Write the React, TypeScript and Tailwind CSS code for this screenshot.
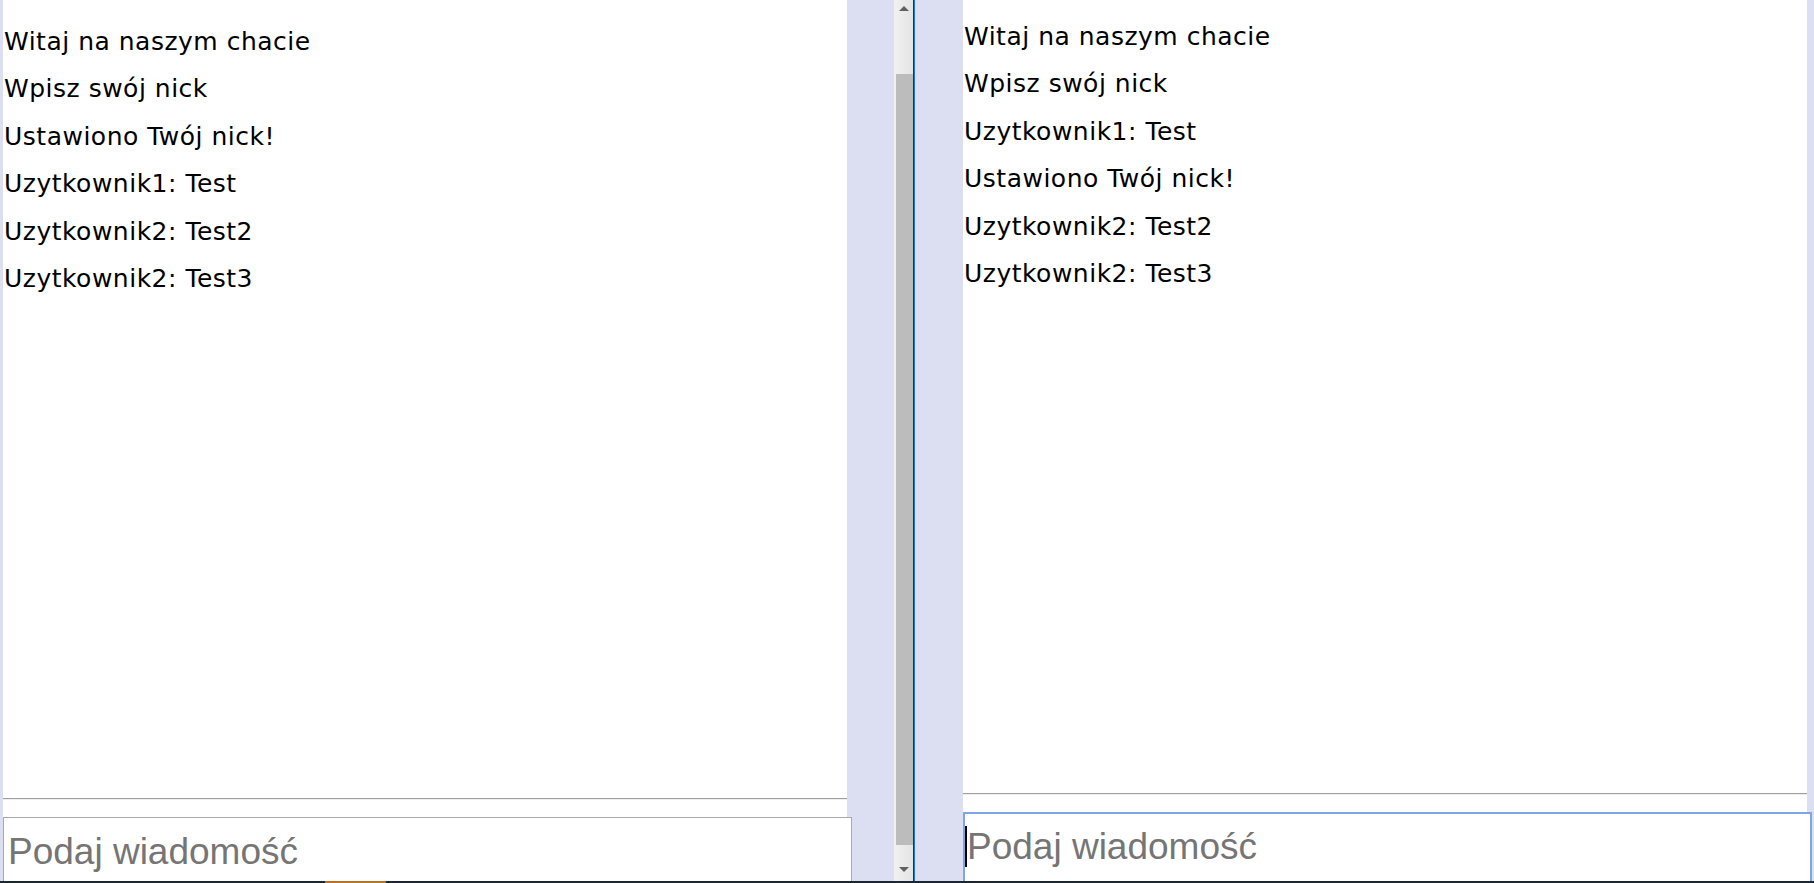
import React from "react";

const msgFont = { fontFamily: '"DejaVu Sans", "Open Sans", sans-serif' };

function Messages({ lines, top }: { lines: string[]; top: string }) {
  return (
    <div className={`flex flex-col ${top}`}>
      {lines.map((l, i) => (
        <div key={i} className="text-[25px] leading-[47.4px] tracking-[0.5px] text-black whitespace-nowrap">
          {l}
        </div>
      ))}
    </div>
  );
}

export default function App() {
  const leftLines = [
    "Witaj na naszym chacie",
    "Wpisz swój nick",
    "Ustawiono Twój nick!",
    "Uzytkownik1: Test",
    "Uzytkownik2: Test2",
    "Uzytkownik2: Test3",
  ];
  const rightLines = [
    "Witaj na naszym chacie",
    "Wpisz swój nick",
    "Uzytkownik1: Test",
    "Ustawiono Twój nick!",
    "Uzytkownik2: Test2",
    "Uzytkownik2: Test3",
  ];
  return (
    <div className="w-[1814px] h-[883px] overflow-hidden flex flex-col bg-[#dcdff2]" style={msgFont}>
      <div className="flex h-[881px] shrink-0 overflow-hidden">
        {/* left frame */}
        <div className="w-[894px] shrink-0 flex pl-[3px]">
          <div className="w-[844px] bg-white flex flex-col shrink-0">
            <div className="h-[798px] shrink-0 pl-[1px]">
              <Messages lines={leftLines} top="pt-[18px]" />
            </div>
            <div className="h-[2px] shrink-0 border-t border-b border-t-[#a0a0a0] border-b-[#eeeeee]" />
            <div className="h-[17px] shrink-0" />
            <div className="w-[849px] h-[70px] shrink-0 bg-white border border-[#a9a9a9] pl-[4px] pt-[13px]">
              <span className="text-[37px] leading-[42px] text-[#757575] whitespace-nowrap" style={{ fontFamily: '"Liberation Sans", Arial, sans-serif' }}>
                Podaj wiadomość
              </span>
            </div>
          </div>
        </div>
        {/* scrollbar */}
        <div className="w-[19px] shrink-0 flex flex-col bg-gradient-to-r from-[#f1f1f1] to-[#e4e4e4]">
          <div className="h-[17px] shrink-0 flex items-center justify-center">
            <div className="w-0 h-0 border-l-[5px] border-r-[5px] border-b-[5px] border-l-transparent border-r-transparent border-b-[#606060]" />
          </div>
          <div className="h-[57px] shrink-0" />
          <div className="h-[771px] shrink-0 ml-[2px] bg-[#bcbcbc]" />
          <div className="flex-1 flex items-end justify-center pb-[9px]">
            <div className="w-0 h-0 border-l-[5px] border-r-[5px] border-t-[5px] border-l-transparent border-r-transparent border-t-[#606060]" />
          </div>
        </div>
        {/* divider */}
        <div className="w-[1px] shrink-0 bg-[#2f2f2f]" />
        <div className="w-[1px] shrink-0 bg-[#1a78d6]" />
        {/* right frame */}
        <div className="flex-1 flex pl-[48px]">
          <div className="w-[844px] bg-white flex flex-col shrink-0">
            <div className="h-[793px] shrink-0 pl-[1px]">
              <Messages lines={rightLines} top="pt-[13px]" />
            </div>
            <div className="h-[2px] shrink-0 border-t border-b border-t-[#a0a0a0] border-b-[#eeeeee]" />
            <div className="h-[17px] shrink-0" />
            <div className="w-[849px] h-[72px] shrink-0 bg-white border-2 border-[#7ea6e6] flex items-start pt-[12px]">
              <div className="w-[2px] h-[41px] bg-black shrink-0" />
              <span className="text-[37px] leading-[42px] text-[#757575] whitespace-nowrap mt-0" style={{ fontFamily: '"Liberation Sans", Arial, sans-serif' }}>
                Podaj wiadomość
              </span>
            </div>
          </div>
        </div>
      </div>
      <div className="h-[2px] shrink-0 flex bg-[#1c2630]">
        <div className="ml-[325px] w-[61px] bg-[#b8702c]" />
      </div>
    </div>
  );
}
